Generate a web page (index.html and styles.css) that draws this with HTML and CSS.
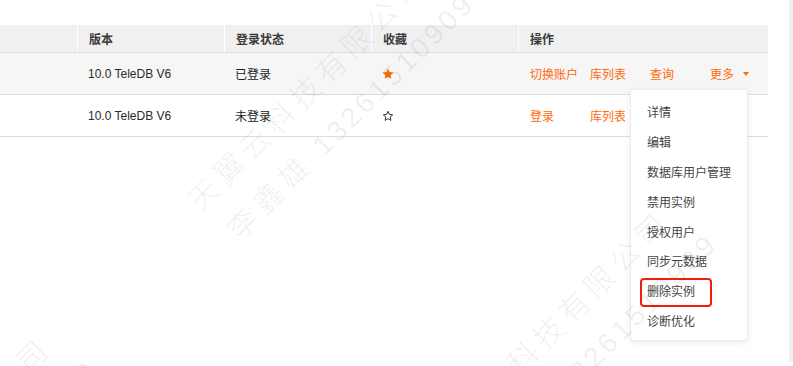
FILE: index.html
```html
<!DOCTYPE html>
<html lang="zh-CN">
<head>
<meta charset="utf-8">
<title>实例列表</title>
<link rel="stylesheet" href="styles.css">
</head>
<body>
<div class="page">
  <div class="content">
    <div class="table">
      <div class="row head">
        <div class="cell hcell first"></div>
        <div class="cell hcell">版本</div>
        <div class="cell hcell">登录状态</div>
        <div class="cell hcell">收藏</div>
        <div class="cell hcell">操作</div>
      </div>
      <div class="row body hover">
        <div class="cell first"></div>
        <div class="cell latin">10.0 TeleDB V6</div>
        <div class="cell">已登录</div>
        <div class="cell star-cell">
          <svg class="star" viewBox="0 0 12 12" width="12" height="12"><path d="M6 0.6 L7.55 4.1 L11.4 4.45 L8.5 7 L9.35 10.8 L6 8.8 L2.65 10.8 L3.5 7 L0.6 4.45 L4.45 4.1 Z" fill="#ff6a00"/></svg>
        </div>
        <div class="cell actions">
          <a class="act">切换账户</a>
          <a class="act">库列表</a>
          <a class="act">查询</a>
          <a class="act more">更多<span class="caret"></span></a>
          <div class="dropdown">
            <div class="item">详情</div>
            <div class="item">编辑</div>
            <div class="item">数据库用户管理</div>
            <div class="item">禁用实例</div>
            <div class="item">授权用户</div>
            <div class="item">同步元数据</div>
            <div class="item marked">删除实例</div>
            <div class="item">诊断优化</div>
          </div>
        </div>
      </div>
      <div class="row body">
        <div class="cell first"></div>
        <div class="cell latin">10.0 TeleDB V6</div>
        <div class="cell">未登录</div>
        <div class="cell star-cell">
          <svg class="star" viewBox="0 0 12 12" width="12" height="12"><path d="M6 1.3 L7.3 4.4 L10.7 4.75 L8.15 7 L8.9 10.4 L6 8.6 L3.1 10.4 L3.85 7 L1.3 4.75 L4.7 4.4 Z" fill="none" stroke="#2b3a4a" stroke-width="1" stroke-linejoin="round"/></svg>
        </div>
        <div class="cell actions">
          <a class="act">登录</a>
          <a class="act">库列表</a>
        </div>
      </div>
    </div>
  </div>
  <div class="scrollbar"></div>

  <div class="watermarks">
    <div class="wm wm-a"><div class="wm-l1"><span class="cjk">天翼云科技有限公司</span></div><div class="wm-l2"><span class="cjk">李鑫雄</span> 13261510909</div></div>
    <div class="wm wm-b"><div class="wm-l1"><span class="cjk">天翼云科技有限公司</span></div><div class="wm-l2"><span class="cjk">李鑫雄</span> 13261510909</div></div>
    <div class="wm wm-c"><div class="wm-l1"><span class="cjk">天翼云科技有限公司</span></div><div class="wm-l2"><span class="cjk">李鑫雄</span> 13261510909</div></div>
  </div>
</div>
</body>
</html>
```

FILE: styles.css
```css
* { box-sizing: border-box; }

html, body {
  margin: 0;
  padding: 0;
  background: #fff;
}

body {
  font-family: "Liberation Sans", "Noto Sans CJK SC", sans-serif;
  font-size: 12px;
  color: #333;
}

.page {
  position: relative;
  display: flex;
  width: 793px;
  height: 366px;
  overflow: hidden;
}

.content {
  width: 789px;
  padding-top: 25px;
}

.scrollbar {
  width: 4px;
  height: 362px;
  background: #efefef;
}

.table {
  width: 768px;
}

.row {
  display: grid;
  grid-template-columns: 77px 147px 147px 147px 250px;
  border-bottom: 1px solid #dcdcdc;
}

.head {
  height: 28px;
  background: #f0f0f0;
}

.hcell {
  display: flex;
  align-items: center;
  padding-left: 11px;
  font-weight: bold;
  color: #3a3a3a;
  border-left: 1px solid #fff;
  font-family: "Noto Sans CJK SC", sans-serif;
}

.hcell.first { border-left: none; }

.body {
  height: 42px;
  background: #fff;
}

.body.hover { background: #f6f6f6; }

.cell { min-width: 0; }

.body .cell {
  display: flex;
  align-items: center;
  padding-left: 11px;
  font-family: "Noto Sans CJK SC", sans-serif;
  color: #222;
}

.body .cell.latin {
  font-family: "Liberation Sans", sans-serif;
  color: #2a2a2a;
}

.star-cell .star {
  display: block;
}

.actions {
  position: relative;
}

.body .cell.actions { padding-left: 12px; }

.act {
  display: flex;
  align-items: center;
  width: 60px;
  color: #ff6a0d;
  text-decoration: none;
  white-space: nowrap;
}

.act.more { width: auto; }

.caret {
  width: 0;
  height: 0;
  margin-left: 9px;
  border-left: 3px solid transparent;
  border-right: 3px solid transparent;
  border-top: 4px solid #ff6a0d;
}

.dropdown {
  position: absolute;
  left: 112px;
  top: 36px;
  width: 118px;
  padding: 7px 0 4px;
  background: #fff;
  border: 1px solid #ececec;
  border-radius: 3px;
  box-shadow: 0 2px 6px rgba(0, 0, 0, 0.08);
  z-index: 5;
}

.item {
  position: relative;
  height: 29.9px;
  line-height: 29.9px;
  padding-left: 16px;
  color: #444;
  white-space: nowrap;
  font-family: "Noto Sans CJK SC", sans-serif;
}

.item.marked::before {
  content: "";
  position: absolute;
  left: 9px;
  top: 2px;
  width: 68px;
  height: 25px;
  border: 2px solid #f01e0a;
  border-radius: 4px;
}

.watermarks {
  position: absolute;
  inset: 0;
  pointer-events: none;
  z-index: 10;
}

.wm {
  position: absolute;
  transform-origin: 0 0;
  transform: rotate(-45deg);
  font-family: "Liberation Sans", sans-serif;
  font-size: 28px;
  font-weight: 300;
  letter-spacing: 4px;
  line-height: 45px;
  color: rgba(0, 0, 0, 0.075);
  white-space: nowrap;
}

.wm .cjk {
  font-family: "Noto Sans CJK SC", sans-serif;
  font-size: 30px;
  font-weight: 300;
  letter-spacing: 6px;
}

.wm-l2 { padding-left: 7px; }

.wm-a { left: 176px; top: 188px; }
.wm-b { left: 419px; top: 428px; }
.wm-c { left: -200px; top: 554px; }
```
